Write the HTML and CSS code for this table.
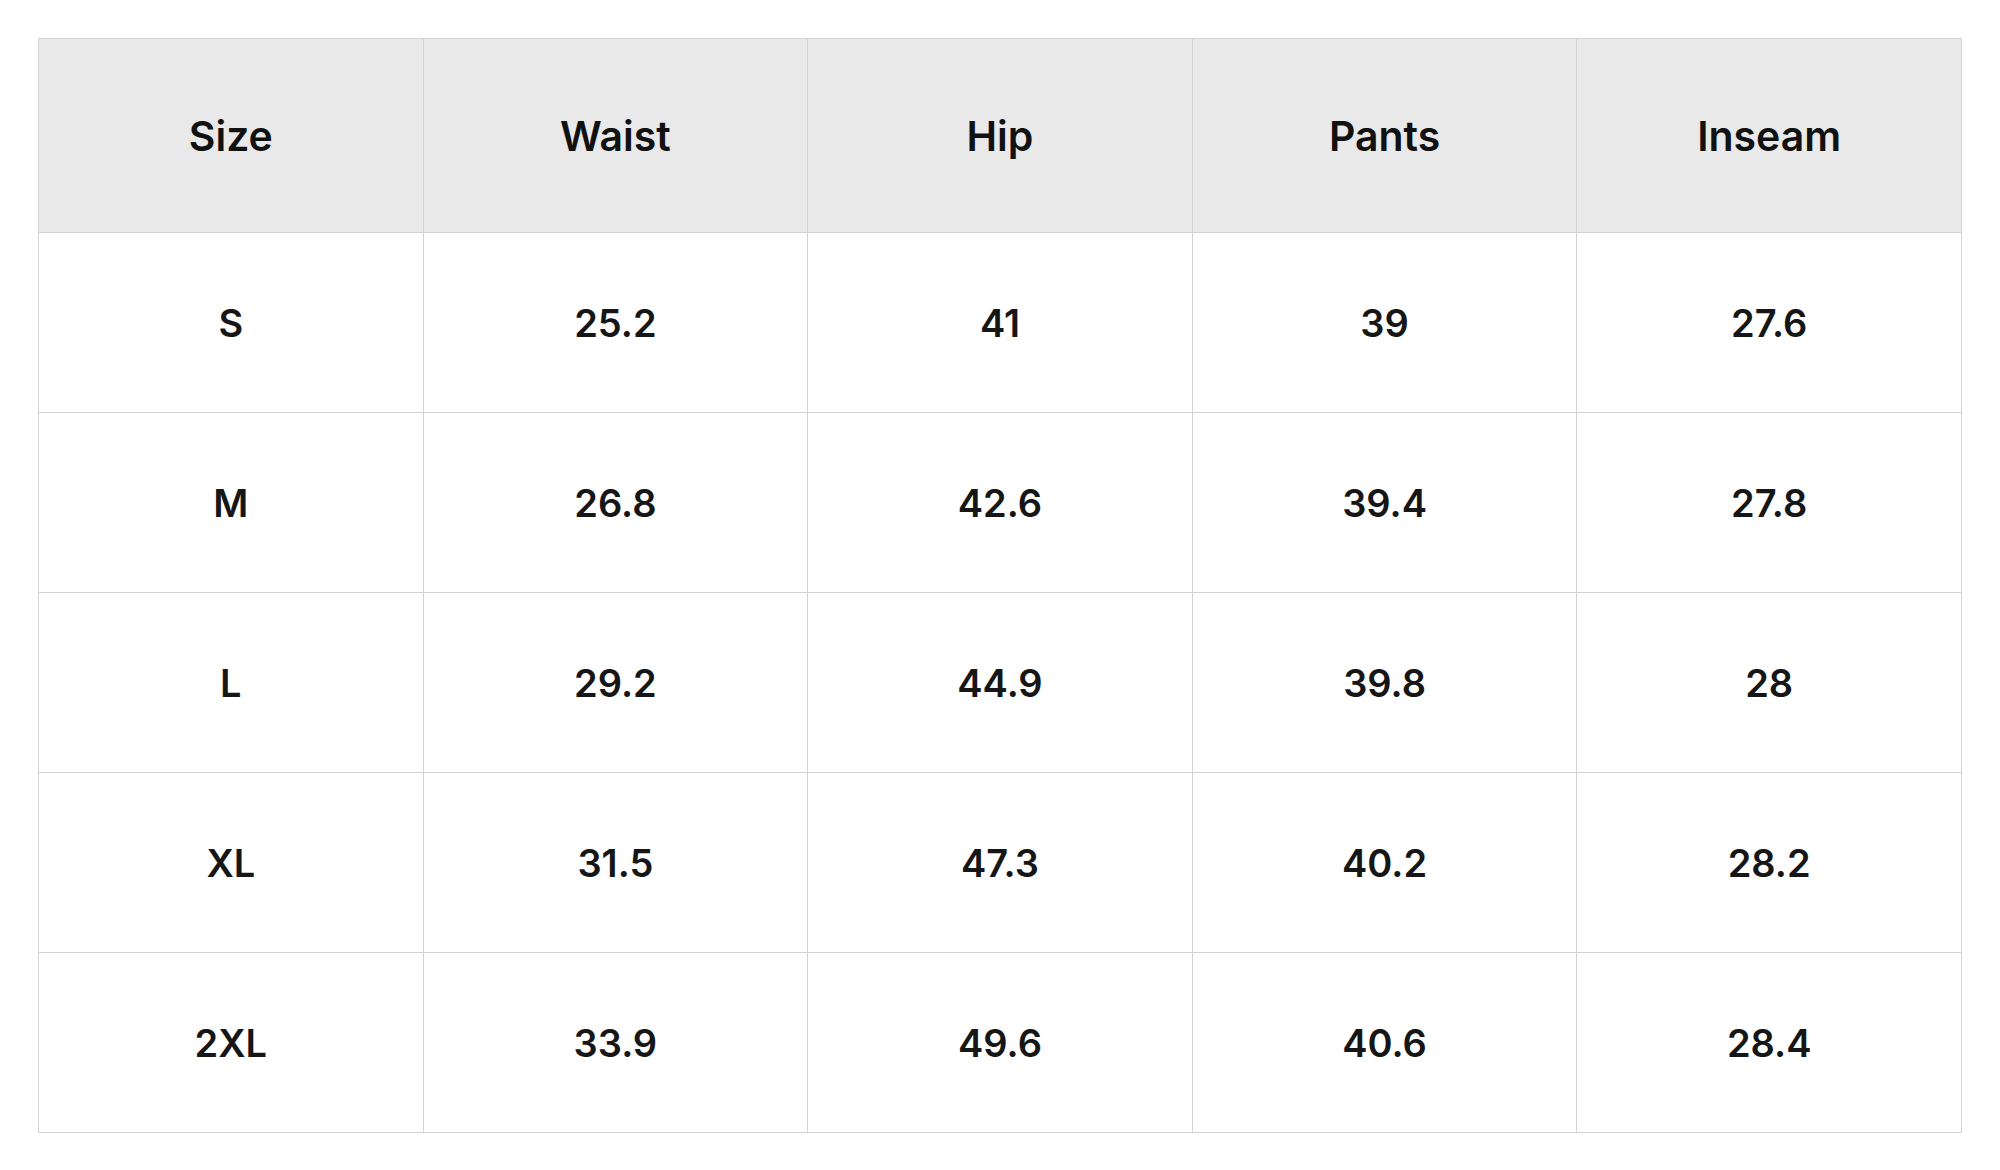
FILE: index.html
```html
<!DOCTYPE html>
<html>
<head>
<meta charset="utf-8">
<link rel="stylesheet" href="styles.css">
</head>
<body>
<div class="wrap">
<table class="size-table">
  <thead>
    <tr><th>Size</th><th>Waist</th><th>Hip</th><th>Pants</th><th>Inseam</th></tr>
  </thead>
  <tbody>
    <tr><td>S</td><td>25.2</td><td>41</td><td>39</td><td>27.6</td></tr>
    <tr><td>M</td><td>26.8</td><td>42.6</td><td>39.4</td><td>27.8</td></tr>
    <tr><td>L</td><td>29.2</td><td>44.9</td><td>39.8</td><td>28</td></tr>
    <tr><td>XL</td><td>31.5</td><td>47.3</td><td>40.2</td><td>28.2</td></tr>
    <tr><td>2XL</td><td>33.9</td><td>49.6</td><td>40.6</td><td>28.4</td></tr>
  </tbody>
</table>
</div>
</body>
</html>
```
FILE: styles.css
```css
html, body {
  margin: 0;
  padding: 0;
  background: #ffffff;
}
.wrap {
  padding: 38px 0 0 38px;
}
.size-table {
  width: 1924px;
  border-collapse: collapse;
  table-layout: fixed;
  font-family: Inter, "Noto Sans", sans-serif;
  color: #161616;
}
.size-table th,
.size-table td {
  border: 1px solid #d3d3d3;
  text-align: center;
  vertical-align: middle;
  padding: 0;
}
.size-table th {
  background: #e9e9e9;
  height: 193px;
  font-size: 41px;
  font-weight: 600;
  color: #111111;
}
.size-table td {
  height: 179px;
  font-size: 38px;
  font-weight: 600;
}
```
